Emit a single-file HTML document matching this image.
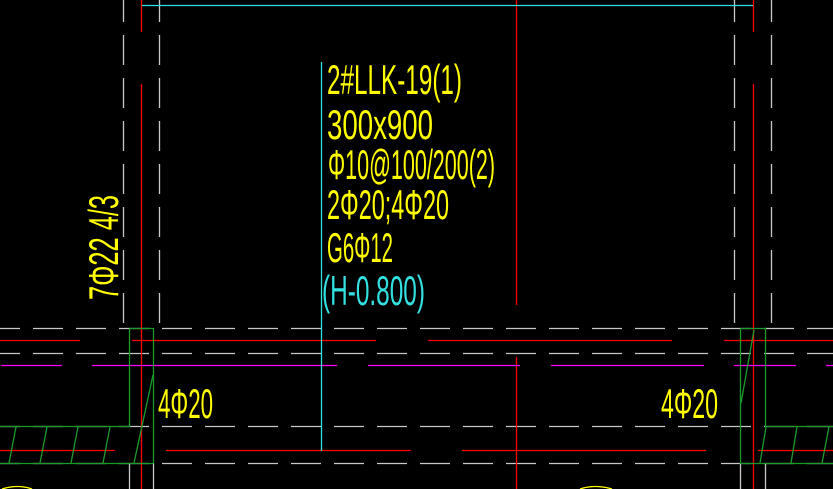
<!DOCTYPE html>
<html><head><style>html,body{margin:0;padding:0;background:#000;width:833px;height:489px;overflow:hidden}</style></head>
<body>
<svg width="833" height="489" viewBox="0 0 833 489" xmlns="http://www.w3.org/2000/svg" style="display:block">
<rect width="833" height="489" fill="#000"/>
<g stroke="#c8c8c8" stroke-width="1.3" fill="none">
 <line x1="123.5" y1="-8" x2="123.5" y2="330" stroke-dasharray="30,13"/>
 <line x1="159.5" y1="-8" x2="159.5" y2="330" stroke-dasharray="30,13"/>
 <line x1="734.5" y1="-8" x2="734.5" y2="330" stroke-dasharray="30,13"/>
 <line x1="771.5" y1="-8" x2="771.5" y2="330" stroke-dasharray="30,13"/>
 <line x1="129.5" y1="463" x2="129.5" y2="489"/>
 <line x1="153.5" y1="463" x2="153.5" y2="489"/>
 <line x1="740.5" y1="463" x2="740.5" y2="489"/>
 <line x1="765.5" y1="463" x2="765.5" y2="489"/>
 <line x1="-10" y1="328.5" x2="833" y2="328.5" stroke-dasharray="30,13"/>
 <line x1="-10" y1="353.5" x2="833" y2="353.5" stroke-dasharray="30,13"/>
 <line x1="-10" y1="426.5" x2="833" y2="426.5" stroke-dasharray="30,13"/>
 <line x1="-10" y1="463.5" x2="833" y2="463.5" stroke-dasharray="30,13"/>
</g>
<g stroke="#ff0000" stroke-width="1.3">
 <line x1="141.5" y1="0" x2="141.5" y2="32"/>
 <line x1="141.5" y1="84" x2="141.5" y2="489"/>
 <line x1="753.5" y1="0" x2="753.5" y2="32"/>
 <line x1="753.5" y1="84" x2="753.5" y2="489"/>
 <line x1="516.5" y1="0" x2="516.5" y2="305"/>
 <line x1="516.5" y1="357" x2="516.5" y2="489"/>
 <line x1="0" y1="340.5" x2="80" y2="340.5"/>
 <line x1="132" y1="340.5" x2="376" y2="340.5"/>
 <line x1="428" y1="340.5" x2="672" y2="340.5"/>
 <line x1="724" y1="340.5" x2="833" y2="340.5"/>
 <line x1="0" y1="450.5" x2="115" y2="450.5"/>
 <line x1="166" y1="450.5" x2="411" y2="450.5"/>
 <line x1="462" y1="450.5" x2="706" y2="450.5"/>
 <line x1="758" y1="450.5" x2="833" y2="450.5"/>
</g>
<g stroke="#ff00ff" stroke-width="1.3">
 <line x1="1" y1="365.5" x2="62" y2="365.5"/>
 <line x1="92" y1="365.5" x2="337" y2="365.5"/>
 <line x1="368" y1="365.5" x2="520" y2="365.5"/>
 <line x1="551" y1="365.5" x2="704" y2="365.5"/>
 <line x1="734" y1="365.5" x2="796" y2="365.5"/>
 <line x1="826" y1="365.5" x2="833" y2="365.5"/>
</g>
<g stroke="#33e0e0" stroke-width="1.3">
 <line x1="142" y1="5.5" x2="753" y2="5.5"/>
 <line x1="321.5" y1="62" x2="321.5" y2="451"/>
</g>
<g stroke="#1a9a2a" stroke-width="1.3" fill="none">
 <path d="M129.5 328.5 H153.5 V463.5 M129.5 328.5 V426.5 H0 M0 463.5 H153.5"/>
 <path d="M153 375 L134 463 M16 427 L9 463 M47 427 L40 463 M78 427 L71 463 M110 427 L103 463"/>
 <path d="M740.5 328.5 H765.5 V426.5 H833 M740.5 328.5 V463.5 H833"/>
 <path d="M754 330 L741 403 M766 427 L760 463 M797 427 L791 463 M829 427 L822 463"/>
</g>
<g stroke="#ffff00" stroke-width="1.3" fill="none">
 <path d="M2 489 Q18 484 32 489"/>
 <path d="M580 489 Q595 484 612 489"/>
</g>
<g fill="#ffff00" font-family="Liberation Sans, sans-serif" font-size="42" stroke="none">
 <text x="327" y="94" textLength="135" lengthAdjust="spacingAndGlyphs">2#LLK-19(1)</text>
 <text x="327" y="139" textLength="106" lengthAdjust="spacingAndGlyphs">300x900</text>
 <text x="328" y="179" textLength="167" lengthAdjust="spacingAndGlyphs">Φ10@100/200(2)</text>
 <text x="327" y="219" textLength="122" lengthAdjust="spacingAndGlyphs">2Φ20;4Φ20</text>
 <text x="327" y="262" textLength="66" lengthAdjust="spacingAndGlyphs">G6Φ12</text>
 <text x="158" y="418" textLength="55" lengthAdjust="spacingAndGlyphs">4Φ20</text>
 <text x="661" y="418" textLength="57" lengthAdjust="spacingAndGlyphs">4Φ20</text>
 <text transform="translate(118,300) rotate(-90)" x="0" y="0" textLength="105" lengthAdjust="spacingAndGlyphs">7Φ22 4/3</text>
 <text x="322" y="305" textLength="103" lengthAdjust="spacingAndGlyphs" fill="#33e0e0">(H-0.800)</text>
</g>
</svg>
</body></html>
